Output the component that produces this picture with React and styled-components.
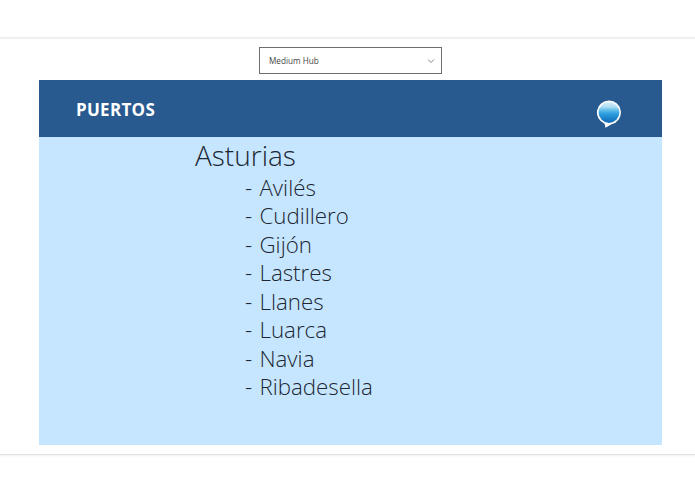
import React from "react";
import styled, { createGlobalStyle } from "styled-components";

const Global = createGlobalStyle`
  html, body { margin: 0; padding: 0; background: #fff; }
  body { width: 695px; height: 494px; overflow: hidden; font-family: "Open Sans", "Liberation Sans", sans-serif; }
`;

const Page = styled.div`
  display: flex;
  flex-direction: column;
  padding-top: 37px;
`;

const Stage = styled.main`
  height: 407px;
  border-top: 2px solid #f0f0f0;
  border-bottom: 1px solid #e2e2e2;
  box-shadow: 0 1px 2px #eeeeee;
  display: flex;
  flex-direction: column;
  align-items: center;
  padding: 8px 0 0 5px;
  box-sizing: content-box;
`;

const Select = styled.div`
  width: 183px;
  height: 27px;
  margin-left: 1px;
  box-sizing: border-box;
  border: 1px solid #6e6e6e;
  display: flex;
  align-items: center;
  justify-content: space-between;
  padding: 0 5px 0 9px;
  font-size: 8.2px;
  color: #444;
  background: #fff;
`;

const Card = styled.section`
  width: 623px;
  margin-top: 6px;
  margin-left: 1px;
  display: flex;
  flex-direction: column;
`;

const Header = styled.header`
  height: 57px;
  background: #285a8f;
  display: flex;
  align-items: center;
  justify-content: space-between;
  padding: 0 40px 0 37px;
`;

const Title = styled.h1`
  margin: 2px 0 0;
  font-size: 17px;
  font-weight: 700;
  color: #fff;
  letter-spacing: 0.3px;
`;

const Bubble = styled.svg`
  margin-top: 11px;
`;

const Body = styled.div`
  height: 308px;
  background: #c6e6ff;
  padding: 0 0 0 156px;
  color: #1c2733;
  font-weight: 300;
`;

const Region = styled.div`
  font-size: 28px;
  line-height: 36.5px;
`;

const Ports = styled.ul`
  list-style: none;
  margin: 0;
  padding: 0 0 0 50px;
`;

const Port = styled.li`
  font-size: 22.3px;
  line-height: 28.5px;
  word-spacing: 1.5px;
`;

const Chevron = () => (
  <svg width="10" height="10" viewBox="0 0 10 10" fill="none" stroke="#777" strokeWidth="0.9">
    <path d="M2 3.5 L5 6.5 L8 3.5" />
  </svg>
);

const AlexaBubble = () => (
  <Bubble width="26" height="29" viewBox="0 0 26 29">
    <defs>
      <linearGradient id="sea" x1="0" y1="0" x2="0" y2="1">
        <stop offset="0" stopColor="#d4eef8" />
        <stop offset="0.22" stopColor="#b4e0f4" />
        <stop offset="0.36" stopColor="#6cc4ec" />
        <stop offset="0.55" stopColor="#2f9fdf" />
        <stop offset="0.8" stopColor="#1a80c8" />
        <stop offset="1" stopColor="#1168b0" />
      </linearGradient>
    </defs>
    <path d="M13 0.5a12 12 0 0 1 2.6 23.7L9.5 27.8 8.6 23.7A12 12 0 0 1 13 0.5z" fill="#fff" />
    <circle cx="13" cy="12.5" r="10.4" fill="url(#sea)" />
  </Bubble>
);

const ports = ["Avilés", "Cudillero", "Gijón", "Lastres", "Llanes", "Luarca", "Navia", "Ribadesella"];

export default function App() {
  return (
    <Page>
      <Global />
      <Stage>
        <Select>
          Medium Hub
          <Chevron />
        </Select>
        <Card>
          <Header>
            <Title>PUERTOS</Title>
            <AlexaBubble />
          </Header>
          <Body>
            <Region>Asturias</Region>
            <Ports>
              {ports.map((p) => (
                <Port key={p}>- {p}</Port>
              ))}
            </Ports>
          </Body>
        </Card>
      </Stage>
    </Page>
  );
}
